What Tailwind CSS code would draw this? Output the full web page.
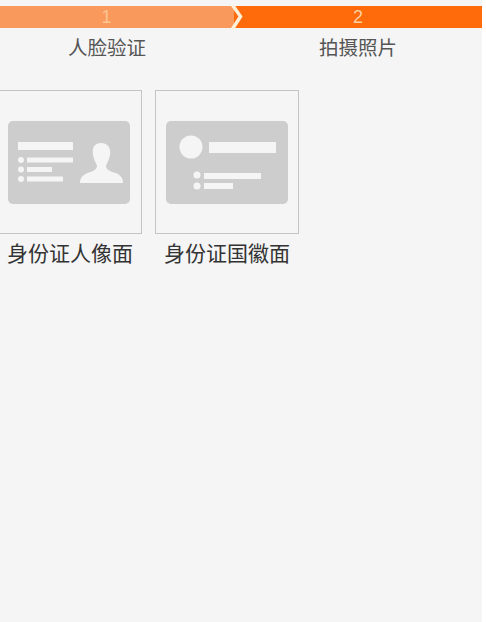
<!DOCTYPE html>
<html lang="zh">
<head>
    <meta charset="UTF-8">
    <meta name="viewport" content="width=device-width, initial-scale=1.0">
    <title>身份证上传</title>
    <script src="https://cdn.jsdelivr.net/npm/@tailwindcss/browser@4"></script>
</head>
<body class="bg-white font-['Liberation_Sans','Noto_Sans_CJK_SC',sans-serif] antialiased">
<div class="w-[482px] h-[622px] bg-[#f5f5f5] overflow-hidden pt-[6px]">
    <!-- steps -->
    <div class="relative flex h-[22px] text-[18px] leading-[22px] text-center">
        <div class="w-[235px] bg-[#f9995c] text-[#fbc493] pr-[22px]">1</div>
        <div class="flex-1 bg-[#ff6a0a] text-[#fbd0a0] pl-[12px] pr-[12px] -ml-px">2</div>
        <svg class="absolute left-[229px] -top-px" width="14" height="25" viewBox="0 0 14 25">
            <path d="M3.5 0 L11.5 11.5 L3.5 24" fill="none" stroke="#fdf0d8" stroke-width="3.5"></path>
        </svg>
    </div>
    <div class="flex text-[19.5px] leading-[24px] text-[#555] mt-[8px]">
        <div class="w-[214px] shrink-0 text-center">人脸验证</div>
        <div class="w-[288px] shrink-0 text-center">拍摄照片</div>
    </div>

    <!-- id cards -->
    <div class="flex gap-[13px] -ml-[2px] mt-[30px]">
        <div class="w-[144px]">
            <div class="h-[144px] border border-[#c4c4c4] flex items-center justify-center pr-[2px]">
                <svg width="122" height="83" viewBox="0 0 122 83">
                    <rect width="122" height="83" rx="5" fill="#cdcdcd"></rect>
                    <g fill="#f5f5f5">
                        <rect x="10" y="21" width="55" height="8"></rect>
                        <circle cx="13" cy="39" r="3"></circle>
                        <rect x="19" y="36.5" width="46" height="5"></rect>
                        <circle cx="13" cy="48.5" r="3"></circle>
                        <rect x="19" y="46" width="25" height="5"></rect>
                        <circle cx="13" cy="58" r="3"></circle>
                        <rect x="19" y="55.5" width="36" height="5"></rect>
                        <path d="M93 22 c7 0 10 5 9 12 c-1 5 -3 8 -4 11 c0 3 3 5 8 6.500 c5 1.500 9 4 9 10.500 h-43 c0 -6 4 -9 9 -10.500 c5 -1.500 8 -3.500 8 -6.500 c-1 -3 -3 -6 -4 -11 c-1 -7 1 -12 8 -12 z"></path>
                    </g>
                </svg>
            </div>
            <p class="text-[21px] leading-[28px] text-[#333] text-center mt-[6px] whitespace-nowrap">身份证人像面</p>
        </div>
        <div class="w-[144px]">
            <div class="h-[144px] border border-[#c4c4c4] flex items-center justify-center">
                <svg width="122" height="83" viewBox="0 0 122 83">
                    <rect width="122" height="83" rx="5" fill="#cdcdcd"></rect>
                    <g fill="#f5f5f5">
                        <circle cx="25" cy="26" r="11.500"></circle>
                        <rect x="43" y="21" width="67" height="11"></rect>
                        <circle cx="31" cy="54" r="3.500"></circle>
                        <rect x="38" y="52" width="57" height="6"></rect>
                        <circle cx="31" cy="65" r="3.500"></circle>
                        <rect x="38" y="62" width="29" height="6"></rect>
                    </g>
                </svg>
            </div>
            <p class="text-[21px] leading-[28px] text-[#333] text-center mt-[6px] whitespace-nowrap">身份证国徽面</p>
        </div>
    </div>
</div>
</body>
</html>
